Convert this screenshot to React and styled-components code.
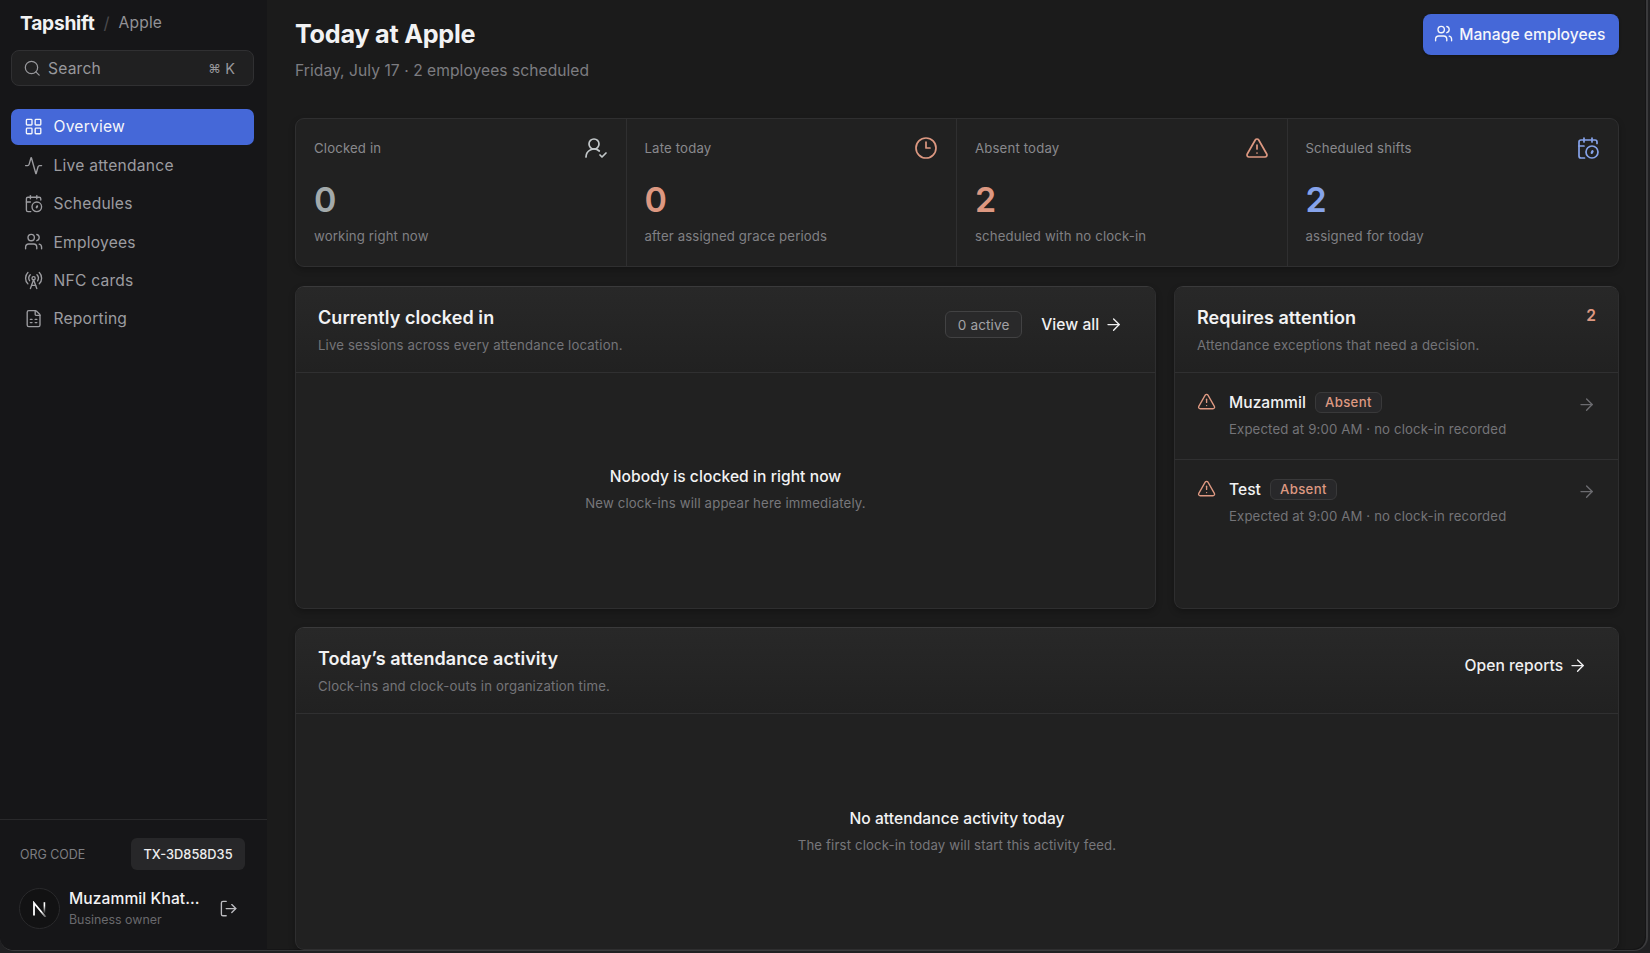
import React from "react";
import styled, { createGlobalStyle } from "styled-components";
import {
  Activity,
  ArrowRight,
  Clock3,
  FileSpreadsheet,
  LayoutGrid,
  LogOut,
  RadioTower,
  Search,
  TriangleAlert,
  UserRoundCheck,
  Users,
} from "lucide-react";

const GlobalStyle = createGlobalStyle`
  *, *::before, *::after { box-sizing: border-box; }
  html, body { margin: 0; background: #202022; }
  body {
    font-family: Inter, "Liberation Sans", "DejaVu Sans", sans-serif;
    color: #f2f2f3;
    overflow: hidden;
    -webkit-font-smoothing: antialiased;
  }
  h1, h2, p { margin: 0; }
  button { font: inherit; color: inherit; border: 0; background: none; padding: 0; }
  svg { display: block; flex: none; }
`;

const Backdrop = styled.div`
  width: 1650px;
  height: 953px;
  background: #202022;
  overflow: hidden;
`;

const Window = styled.div`
  display: flex;
  width: 1648px;
  height: 951px;
  background: #1b1b1b;
  border: solid #3a3a3c;
  border-width: 0 2px 1px 0;
  border-radius: 0 0 14px 14px;
  box-shadow: inset -1px -1px 0 #151516;
  overflow: hidden;
`;

const Sidebar = styled.aside`
  display: flex;
  flex-direction: column;
  flex: none;
  width: 267px;
  background: #161618;
`;

const Brand = styled.div`
  display: flex;
  align-items: flex-start;
  padding: 11px 0 0 20px;
  height: 50px;
  line-height: 24px;
`;

const BrandName = styled.span`
  font-size: 19.2px;
  font-weight: 700;
  letter-spacing: -0.25px;
`;

const BrandSlash = styled.span`
  width: 24px;
  text-align: center;
  font-size: 16.8px;
  color: #4a4a4d;
`;

const BrandOrg = styled.span`
  font-size: 15.6px;
  letter-spacing: 0.2px;
  color: #929296;
`;

const SearchBox = styled.button`
  display: flex;
  align-items: center;
  width: 243px;
  height: 36px;
  margin-left: 11px;
  padding: 0 18px 0 11px;
  border: 1px solid #303032;
  border-radius: 8px;
  background: #202021;
  color: #98989c;
  font-size: 15.6px;
  letter-spacing: 0.2px;
`;

const SearchLabel = styled.span`
  margin-left: 6.5px;
`;

const Shortcut = styled.span`
  display: flex;
  align-items: center;
  gap: 4px;
  margin-left: auto;
  font-size: 14.4px;
`;

const CommandKey = styled.span`
  font-size: 12.6px;
`;

const Nav = styled.nav`
  display: flex;
  flex-direction: column;
  gap: 2.4px;
  padding: 22.8px 13px 0 11px;
`;

const NavItem = styled.a`
  display: flex;
  align-items: center;
  gap: 10.8px;
  height: 36px;
  padding-left: 12.5px;
  border-radius: 7px;
  font-size: 15.6px;
  line-height: 22px;
  letter-spacing: 0.23px;
  background: ${(p) => (p.$active ? "#4568d8" : "transparent")};
  color: ${(p) => (p.$active ? "#f5f6fb" : "#9c9ca0")};
`;

const NavLabel = styled.span`
  padding-top: 1.2px;
`;

const SidebarFooter = styled.div`
  margin-top: auto;
  height: 131px;
  padding: 18px 22px 0 19px;
  border-top: 1px solid #29292b;
`;

const OrgRow = styled.div`
  display: flex;
  align-items: center;
  justify-content: space-between;
  height: 32px;
`;

const OrgLabel = styled.span`
  padding-left: 1px;
  font-size: 12.4px;
  color: #7e7e82;
`;

const OrgCode = styled.span`
  display: grid;
  place-items: center;
  width: 114px;
  height: 32px;
  border-radius: 6px;
  background: #272729;
  font-size: 12.8px;
  font-weight: 500;
  color: #eeeeef;
`;

const Account = styled.div`
  display: flex;
  align-items: center;
  margin-top: 18px;
  height: 41px;
`;

const Avatar = styled.div`
  display: grid;
  place-items: center;
  width: 41px;
  height: 41px;
  border: 1px solid #2a2a2c;
  border-radius: 50%;
  background: #121213;
`;

const AccountText = styled.div`
  margin-left: 9px;
  width: 132px;
`;

const AccountName = styled.div`
  padding-top: 1px;
  font-size: 15.6px;
  line-height: 20px;
  font-weight: 500;
  letter-spacing: 0.08px;
  white-space: nowrap;
`;

const AccountRole = styled.div`
  margin-top: 1px;
  font-size: 12.4px;
  line-height: 20px;
  color: #69696d;
`;

const LogoutButton = styled.button`
  margin-left: 18px;
  color: #bcbcc0;
`;

const Main = styled.main`
  flex: 1;
  min-width: 0;
  padding: 14px 27px 0 28px;
`;

const PageHeader = styled.header`
  display: flex;
  justify-content: space-between;
  align-items: flex-start;
  height: 104px;
`;

const PageTitle = styled.h1`
  padding-top: 4px;
  font-size: 25.2px;
  line-height: 32px;
  font-weight: 700;
  letter-spacing: -0.24px;
`;

const PageSubtitle = styled.p`
  margin-top: 9px;
  font-size: 15.6px;
  line-height: 24px;
  letter-spacing: 0.05px;
  color: #7d7d81;
`;

const PrimaryButton = styled.button`
  display: flex;
  align-items: center;
  gap: 6px;
  width: 196px;
  height: 41px;
  padding: 0 0 1px 11px;
  border-radius: 8px;
  background: #4568d8;
  color: #f5f6fb;
  font-size: 15.6px;
  font-weight: 500;
  letter-spacing: 0.05px;
  white-space: nowrap;
  box-shadow: 0 1px 3px rgba(0, 0, 0, 0.3);
`;

const Stats = styled.section`
  display: grid;
  grid-template-columns: repeat(4, 1fr);
  height: 149px;
  border: 1px solid #2f2f30;
  border-radius: 9px;
  background: #212121;
  box-shadow: 0 3px 6px rgba(0, 0, 0, 0.25);
`;

const Stat = styled.div`
  padding: 17px 18px 0;
  border-right: 1px solid #2f2f30;
  &:last-child { border-right: 0; }
`;

const StatTop = styled.div`
  display: flex;
  align-items: center;
  justify-content: space-between;
  height: 24px;
  color: ${(p) => p.$tone};
`;

const StatLabel = styled.span`
  line-height: 20px;
  font-size: 13.2px;
  letter-spacing: 0.16px;
  color: #89898d;
`;

const StatValue = styled.div`
  margin-top: 19.5px;
  font-size: 34px;
  line-height: 40px;
  font-weight: 600;
  color: ${(p) => p.$tone};
`;

const StatNote = styled.div`
  margin-top: 6.5px;
  font-size: 13.2px;
  line-height: 20px;
  letter-spacing: 0.14px;
  color: #808084;
`;

const PanelRow = styled.div`
  display: grid;
  grid-template-columns: 861px 1fr;
  gap: 18px;
  margin: 19px 0 18px;
`;

const Panel = styled.section`
  display: flex;
  flex-direction: column;
  height: 323px;
  border: 1px solid #2e2e2f;
  border-top-color: #3a3a3b;
  border-radius: 9px;
  background: #212121;
  box-shadow: 0 3px 6px rgba(0, 0, 0, 0.25);
  overflow: hidden;
`;

const PanelHeader = styled.header`
  display: flex;
  justify-content: space-between;
  height: 86px;
  padding: 18px 22px 0 22px;
  border-bottom: 1px solid #303031;
  background: linear-gradient(#282828, #212121);
`;

const PanelTitle = styled.h2`
  font-size: 18px;
  line-height: 26px;
  font-weight: 600;
  letter-spacing: 0.06px;
`;

const PanelSubtitle = styled.p`
  margin-top: 3px;
  font-size: 13.2px;
  line-height: 22px;
  letter-spacing: 0.15px;
  color: #747478;
`;

const PanelActions = styled.div`
  display: flex;
  align-items: center;
  gap: 19px;
  height: 39px;
  padding-right: ${(p) => p.$inset}px;
`;

const CountBadge = styled.span`
  display: grid;
  place-items: center;
  width: 77px;
  height: 27px;
  border: 1px solid #424243;
  border-radius: 6px;
  background: #29292a;
  font-size: 13.6px;
  letter-spacing: 0.1px;
  color: #a2a2a6;
`;

const LinkAction = styled.a`
  display: flex;
  align-items: center;
  gap: 4.5px;
  font-size: 15.6px;
  font-weight: 500;
  letter-spacing: 0.06px;
  color: #f0f0f1;
`;

const AttentionCount = styled.span`
  font-size: 15.6px;
  line-height: 22px;
  font-weight: 600;
  color: #dd9881;
`;

const Empty = styled.div`
  display: flex;
  flex-direction: column;
  align-items: center;
  padding-top: ${(p) => p.$offset}px;
`;

const EmptyTitle = styled.div`
  font-size: 15.6px;
  line-height: 24px;
  font-weight: 500;
  letter-spacing: 0.06px;
`;

const EmptyNote = styled.div`
  margin-top: 3px;
  font-size: 13.2px;
  line-height: 22px;
  letter-spacing: 0.15px;
  color: #77777b;
`;

const AttentionItem = styled.a`
  display: flex;
  align-items: flex-start;
  height: 86px;
  padding: 17px 21px 0 22px;
  & + & { height: 87px; border-top: 1px solid #303031; }
`;

const ItemIcon = styled.span`
  padding-top: 2px;
  color: #dd9881;
`;

const ItemArrow = styled.span`
  margin-left: auto;
  padding: 5px 1px 0 0;
  color: #6c6c70;
`;

const ItemText = styled.div`
  margin-left: 12.8px;
`;

const ItemHead = styled.div`
  display: flex;
  align-items: center;
  gap: 9px;
  height: 24px;
  font-size: 15.6px;
  font-weight: 500;
  letter-spacing: 0.02px;
`;

const AbsentTag = styled.span`
  display: grid;
  place-items: center;
  width: 67px;
  height: 21px;
  border: 1px solid #39393a;
  border-radius: 6px;
  background: #28282a;
  font-size: 13.2px;
  letter-spacing: 0.3px;
  color: #dd9881;
`;

const ItemNote = styled.div`
  margin-top: 4px;
  font-size: 13.2px;
  line-height: 22px;
  letter-spacing: 0.14px;
  color: #747478;
`;

const ShiftIcon = ({ size, strokeWidth }) => (
  <svg
    width={size}
    height={size}
    viewBox="0 0 24 24"
    fill="none"
    stroke="currentColor"
    strokeWidth={strokeWidth}
    strokeLinecap="round"
    strokeLinejoin="round"
  >
    <path d="M21 7.5V6a2 2 0 0 0-2-2H5a2 2 0 0 0-2 2v14a2 2 0 0 0 2 2h3.5" />
    <path d="M3 10h5" />
    <path d="M8 2v4" />
    <path d="M16 2v4" />
    <circle cx="16" cy="16" r="6" />
    <path d="M15.8 16.8 16.5 15.3" strokeWidth="2.4" />
  </svg>
);

const icon = { size: 19.2, strokeWidth: 1.7 };

const navItems = [
  { label: "Overview", Icon: LayoutGrid, active: true },
  { label: "Live attendance", Icon: Activity },
  { label: "Schedules", Icon: ShiftIcon },
  { label: "Employees", Icon: Users },
  { label: "NFC cards", Icon: RadioTower },
  { label: "Reporting", Icon: FileSpreadsheet },
];

const stats = [
  { label: "Clocked in", value: 0, note: "working right now", Icon: UserRoundCheck, tone: "#a3aaab", iconTone: "#c3c8ca" },
  { label: "Late today", value: 0, note: "after assigned grace periods", Icon: Clock3, tone: "#dd9881" },
  { label: "Absent today", value: 2, note: "scheduled with no clock-in", Icon: TriangleAlert, tone: "#dd9881" },
  { label: "Scheduled shifts", value: 2, note: "assigned for today", Icon: ShiftIcon, tone: "#86a3ea" },
];

const BrandMark = () => (
  <svg width="15" height="16" viewBox="0 0 15 16" fill="none">
    <defs>
      <linearGradient id="stem" x1="0" y1="0" x2="0" y2="1">
        <stop offset="0.3" stopColor="#fff" />
        <stop offset="1" stopColor="#fff" stopOpacity="0" />
      </linearGradient>
      <linearGradient id="diagonal" x1="0" y1="0" x2="1" y2="1">
        <stop offset="0.6" stopColor="#fff" />
        <stop offset="1" stopColor="#fff" stopOpacity="0.3" />
      </linearGradient>
    </defs>
    <path d="M2 14.5V2L13.6 16" stroke="url(#diagonal)" strokeWidth="1.8" />
    <rect x="11.6" y="1.2" width="1.6" height="11.5" fill="url(#stem)" />
  </svg>
);

const Attention = ({ name }) => (
  <AttentionItem>
    <ItemIcon><TriangleAlert {...icon} /></ItemIcon>
    <ItemText>
      <ItemHead>{name}<AbsentTag>Absent</AbsentTag></ItemHead>
      <ItemNote>Expected at 9:00 AM · no clock-in recorded</ItemNote>
    </ItemText>
    <ItemArrow><ArrowRight {...icon} /></ItemArrow>
  </AttentionItem>
);

export default function App() {
  return (
    <Backdrop>
      <GlobalStyle />
      <Window>
        <Sidebar>
          <Brand>
            <BrandName>Tapshift</BrandName>
            <BrandSlash>/</BrandSlash>
            <BrandOrg>Apple</BrandOrg>
          </Brand>
          <SearchBox>
            <Search size={18.5} strokeWidth={1.6} />
            <SearchLabel>Search</SearchLabel>
            <Shortcut><CommandKey>⌘</CommandKey>K</Shortcut>
          </SearchBox>
          <Nav>
            {navItems.map(({ label, Icon, active }) => (
              <NavItem key={label} $active={active}>
                <Icon {...icon} />
                <NavLabel>{label}</NavLabel>
              </NavItem>
            ))}
          </Nav>
          <SidebarFooter>
            <OrgRow>
              <OrgLabel>ORG CODE</OrgLabel>
              <OrgCode>TX-3D858D35</OrgCode>
            </OrgRow>
            <Account>
              <Avatar><BrandMark /></Avatar>
              <AccountText>
                <AccountName>Muzammil Khat...</AccountName>
                <AccountRole>Business owner</AccountRole>
              </AccountText>
              <LogoutButton><LogOut {...icon} /></LogoutButton>
            </Account>
          </SidebarFooter>
        </Sidebar>
        <Main>
          <PageHeader>
            <div>
              <PageTitle>Today at Apple</PageTitle>
              <PageSubtitle>Friday, July 17 · 2 employees scheduled</PageSubtitle>
            </div>
            <PrimaryButton><Users {...icon} />Manage employees</PrimaryButton>
          </PageHeader>
          <Stats>
            {stats.map(({ label, value, note, Icon, tone, iconTone }) => (
              <Stat key={label}>
                <StatTop $tone={iconTone || tone}>
                  <StatLabel>{label}</StatLabel>
                  <Icon size={24} strokeWidth={1.7} />
                </StatTop>
                <StatValue $tone={tone}>{value}</StatValue>
                <StatNote>{note}</StatNote>
              </Stat>
            ))}
          </Stats>
          <PanelRow>
            <Panel>
              <PanelHeader>
                <div>
                  <PanelTitle>Currently clocked in</PanelTitle>
                  <PanelSubtitle>Live sessions across every attendance location.</PanelSubtitle>
                </div>
                <PanelActions $inset={10}>
                  <CountBadge>0 active</CountBadge>
                  <LinkAction>View all<ArrowRight {...icon} /></LinkAction>
                </PanelActions>
              </PanelHeader>
              <Empty $offset={92}>
                <EmptyTitle>Nobody is clocked in right now</EmptyTitle>
                <EmptyNote>New clock-ins will appear here immediately.</EmptyNote>
              </Empty>
            </Panel>
            <Panel>
              <PanelHeader>
                <div>
                  <PanelTitle>Requires attention</PanelTitle>
                  <PanelSubtitle>Attendance exceptions that need a decision.</PanelSubtitle>
                </div>
                <AttentionCount>2</AttentionCount>
              </PanelHeader>
              <Attention name="Muzammil" />
              <Attention name="Test" />
            </Panel>
          </PanelRow>
          <Panel>
            <PanelHeader>
              <div>
                <PanelTitle>Today’s attendance activity</PanelTitle>
                <PanelSubtitle>Clock-ins and clock-outs in organization time.</PanelSubtitle>
              </div>
              <PanelActions $inset={9}>
                <LinkAction>Open reports<ArrowRight {...icon} /></LinkAction>
              </PanelActions>
            </PanelHeader>
            <Empty $offset={93}>
              <EmptyTitle>No attendance activity today</EmptyTitle>
              <EmptyNote>The first clock-in today will start this activity feed.</EmptyNote>
            </Empty>
          </Panel>
        </Main>
      </Window>
    </Backdrop>
  );
}
